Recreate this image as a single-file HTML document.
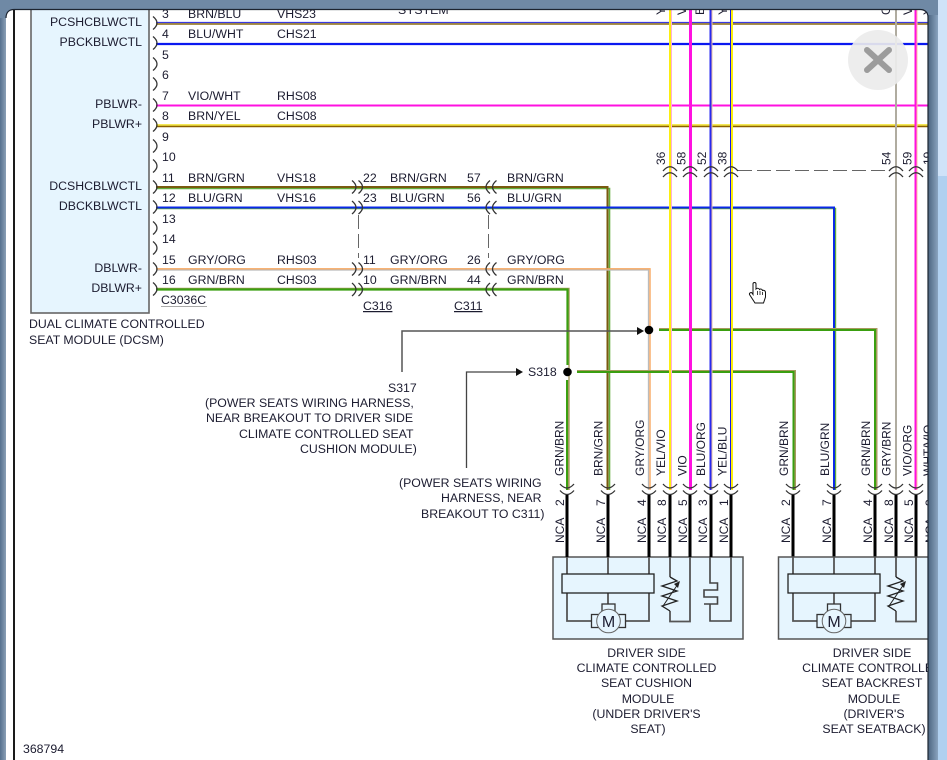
<!DOCTYPE html>
<html><head><meta charset="utf-8"><style>
html,body{margin:0;padding:0;background:#fff;width:947px;height:760px;overflow:hidden}
svg{display:block}
text{font-family:"Liberation Sans",Arial,sans-serif;font-size:12.3px;fill:#1c1c30}
.r text{font-size:12px}
.w{fill:none;stroke-linejoin:miter}
.c{fill:none;stroke:#333;stroke-width:1.3}
.b{fill:none;stroke:#000;stroke-width:3}
.g{fill:none;stroke:#555;stroke-width:1.8}
</style></head><body>
<svg width="947" height="760" viewBox="0 0 947 760" xmlns="http://www.w3.org/2000/svg">
<defs>
<linearGradient id="lg" x1="0" x2="1" y1="0" y2="0"><stop offset="0" stop-color="#56708e"/><stop offset="1" stop-color="#8ba0b6"/></linearGradient>
<linearGradient id="rg" x1="0" x2="1" y1="0" y2="0"><stop offset="0" stop-color="#4f6883"/><stop offset="1" stop-color="#8ca6c2"/></linearGradient>
<path id="rb" class="c" d="M0 -6.500Q8 0 0 6.500"/>
<path id="lb" class="c" d="M0 -6.500Q-8 0 0 6.500"/>
<g id="up"><path class="c" d="M-7 4Q0 -4.500 7 4"/><path class="c" d="M-7 10Q0 1.500 7 10"/></g>
<g id="dn"><path class="c" d="M-7 -4Q0 4 7 -4"/><path class="c" d="M-7 2.500Q0 10.500 7 2.500"/></g>
</defs>
<rect width="947" height="760" fill="#fff"/>

<!-- left module -->
<rect x="31" y="-5" width="118" height="318" fill="#e6f5fe" stroke="#666" stroke-width="1.600"/>
<g text-anchor="end">
<text x="142" y="26">PCSHCBLWCTL</text><text x="142" y="46">PBCKBLWCTL</text>
<text x="142" y="108">PBLWR-</text><text x="142" y="128">PBLWR+</text>
<text x="142" y="190">DCSHCBLWCTL</text><text x="142" y="210">DBCKBLWCTL</text>
<text x="142" y="272">DBLWR-</text><text x="142" y="292">DBLWR+</text>
</g>
<text x="29" y="328">DUAL CLIMATE CONTROLLED</text>
<text x="29" y="344">SEAT MODULE (DCSM)</text>
<text x="23" y="753">368794</text>

<!-- pin numbers -->
<g>
<text x="162" y="18">3</text><text x="162" y="38">4</text><text x="162" y="59">5</text><text x="162" y="79">6</text>
<text x="162" y="100">7</text><text x="162" y="120">8</text><text x="162" y="141">9</text><text x="162" y="161">10</text>
<text x="162" y="182">11</text><text x="162" y="202">12</text><text x="162" y="223">13</text><text x="162" y="243">14</text>
<text x="162" y="264">15</text><text x="162" y="284">16</text>
<text x="188" y="18">BRN/BLU</text><text x="277" y="18">VHS23</text>
<text x="188" y="38">BLU/WHT</text><text x="277" y="38">CHS21</text>
<text x="188" y="100">VIO/WHT</text><text x="277" y="100">RHS08</text>
<text x="188" y="120">BRN/YEL</text><text x="277" y="120">CHS08</text>
<text x="188" y="182">BRN/GRN</text><text x="277" y="182">VHS18</text>
<text x="188" y="202">BLU/GRN</text><text x="277" y="202">VHS16</text>
<text x="188" y="264">GRY/ORG</text><text x="277" y="264">RHS03</text>
<text x="188" y="284">GRN/BRN</text><text x="277" y="284">CHS03</text>
<text x="398" y="14">SYSTEM</text>
<text x="161" y="304">C3036C</text>
<path d="M161 306.500H207" stroke="#aaa" stroke-width="1"/>
<text x="363" y="182">22</text><text x="390" y="182">BRN/GRN</text><text x="467" y="182">57</text><text x="507" y="182">BRN/GRN</text>
<text x="363" y="202">23</text><text x="390" y="202">BLU/GRN</text><text x="467" y="202">56</text><text x="507" y="202">BLU/GRN</text>
<text x="363" y="264">11</text><text x="390" y="264">GRY/ORG</text><text x="467" y="264">26</text><text x="507" y="264">GRY/ORG</text>
<text x="363" y="284">10</text><text x="390" y="284">GRN/BRN</text><text x="467" y="284">44</text><text x="507" y="284">GRN/BRN</text>
<text x="363" y="310" text-decoration="underline">C316</text>
<text x="454" y="310" text-decoration="underline">C311</text>
</g>

<!-- horizontal wires to right edge -->
<path d="M156 22.500H930" stroke="#3a3ae0" stroke-width="1.300"/><path d="M156 24H930" stroke="#8a6a10" stroke-width="1.500"/>
<path d="M156 44H930" stroke="#0a18f0" stroke-width="2.200"/>
<path d="M156 105.500H930" stroke="#ff10e0" stroke-width="2"/>
<path d="M156 125H930" stroke="#f0e020" stroke-width="1.400"/><path d="M156 126.500H930" stroke="#8a6000" stroke-width="1.500"/>

<!-- harness wires with tracer -->
<path class="w" d="M156 188.500H609.500V490" stroke="#62ad3c" stroke-width="1.600" />
<path class="w" d="M156 187H607.500V490" stroke="#7a5a10" stroke-width="2" />
<path class="w" d="M156 208.500H835.500V490" stroke="#62ad3c" stroke-width="1.400"/>
<path class="w" d="M156 207.500H834V490" stroke="#0a28e8" stroke-width="2"/>
<path class="w" d="M156 270H648.500V490" stroke="#bbb" stroke-width="1.300"/>
<path class="w" d="M156 268.800H650V490" stroke="#f8a860" stroke-width="1.400"/>
<path class="w" d="M156 288.500H569V490" stroke="#a89a60" stroke-width="1.400"/>
<path class="w" d="M156 289.500H567.500V365" stroke="#3a9f10" stroke-width="2.200"/>
<path class="w" d="M567.500 380V490" stroke="#a89a60" stroke-width="3"/>
<path class="w" d="M567 380V490" stroke="#3a9f10" stroke-width="2"/>
<path class="w" d="M577 371.500H794.500V490" stroke="#a89a60" stroke-width="3"/>
<path class="w" d="M577 372H793.500V490" stroke="#3a9f10" stroke-width="2"/>
<path class="w" d="M659 329.500H876V490" stroke="#a89a60" stroke-width="3"/>
<path class="w" d="M659 330H875V490" stroke="#3a9f10" stroke-width="2"/>

<!-- vertical wires -->
<path d="M670 0V490" stroke="#fbee10" stroke-width="2"/><path d="M671.500 0V490" stroke="#ffb0d8" stroke-width="1"/>
<path d="M690.500 0V490" stroke="#ff10e0" stroke-width="3"/>
<path d="M710.500 0V490" stroke="#2a2af0" stroke-width="2"/><path d="M712 0V490" stroke="#e8c0a0" stroke-width="1"/>
<path d="M730.500 0V490" stroke="#1818f0" stroke-width="1"/><path d="M732 0V490" stroke="#fbee10" stroke-width="2"/>
<path d="M896 0V490" stroke="#b0aca0" stroke-width="2"/>
<path d="M915.500 0V490" stroke="#ff10e0" stroke-width="2"/><path d="M917 0V490" stroke="#ffc0a0" stroke-width="1"/>

<!-- dashed -->
<g stroke="#666" stroke-width="1" stroke-dasharray="14 5" fill="none">
<path d="M358.500 215V258"/><path d="M488.500 215V258"/><path d="M738 170.500H888"/>
</g>

<!-- pin brackets -->
<g>
<use href="#rb" x="153" y="23"/><use href="#rb" x="153" y="43"/><use href="#rb" x="153" y="64"/><use href="#rb" x="153" y="84"/>
<use href="#rb" x="153" y="105"/><use href="#rb" x="153" y="125"/><use href="#rb" x="153" y="146"/><use href="#rb" x="153" y="166"/>
<use href="#rb" x="153" y="187"/><use href="#rb" x="153" y="207"/><use href="#rb" x="153" y="228"/><use href="#rb" x="153" y="248"/>
<use href="#rb" x="153" y="269"/><use href="#rb" x="153" y="289"/>
<use href="#rb" x="352" y="187"/><use href="#rb" x="358.500" y="187"/><use href="#rb" x="352" y="207.500"/><use href="#rb" x="358.500" y="207.500"/>
<use href="#rb" x="352" y="269"/><use href="#rb" x="358.500" y="269"/><use href="#rb" x="352" y="289.500"/><use href="#rb" x="358.500" y="289.500"/>
<use href="#lb" x="490" y="187"/><use href="#lb" x="496.500" y="187"/><use href="#lb" x="490" y="207.500"/><use href="#lb" x="496.500" y="207.500"/>
<use href="#lb" x="490" y="269"/><use href="#lb" x="496.500" y="269"/><use href="#lb" x="490" y="289.500"/><use href="#lb" x="496.500" y="289.500"/>
<use href="#up" x="670" y="167"/><use href="#up" x="690" y="167"/><use href="#up" x="711" y="167"/><use href="#up" x="731" y="167"/>
<use href="#up" x="896" y="167"/><use href="#up" x="916" y="167"/>
</g>
<g class="r">
<text transform="translate(665 165) rotate(-90)">36</text>
<text transform="translate(685.500 165) rotate(-90)">58</text>
<text transform="translate(706 165) rotate(-90)">52</text>
<text transform="translate(726.500 165) rotate(-90)">38</text>
<text transform="translate(890.500 165) rotate(-90)">54</text>
<text transform="translate(911.500 165) rotate(-90)">59</text>
<text transform="translate(932 165) rotate(-90)">19</text>
<text transform="translate(665 15) rotate(-90)">YEL/VIO</text>
<text transform="translate(686 15) rotate(-90)">VIO</text>
<text transform="translate(704 15) rotate(-90)">BLU/ORG</text>
<text transform="translate(727 15) rotate(-90)">YEL/BLU</text>
<text transform="translate(890 15) rotate(-90)">GRY/BRN</text>
<text transform="translate(912 15) rotate(-90)">VIO/ORG</text>
<text transform="translate(932 15) rotate(-90)">YEL/VIO</text>
</g>

<!-- splices and leaders -->
<circle cx="567.500" cy="372" r="4.300" fill="#000"/>
<circle cx="649" cy="330" r="4.300" fill="#000"/>
<path d="M402 372V331H637" fill="none" stroke="#555" stroke-width="1.500"/>
<path d="M637 327L644 331L637 335Z" fill="#111"/>
<path d="M466.500 468V372H516" fill="none" stroke="#444" stroke-width="1.300"/>
<path d="M516 368L523 372L516 376Z" fill="#111"/>
<text x="528" y="376">S318</text>
<text x="388" y="392">S317</text>
<text x="205" y="407">(POWER SEATS WIRING HARNESS,</text>
<text x="206" y="422">NEAR BREAKOUT TO DRIVER SIDE</text>
<text x="239" y="438">CLIMATE CONTROLLED SEAT</text>
<text x="300" y="453">CUSHION MODULE)</text>
<text x="399" y="487">(POWER SEATS WIRING</text>
<text x="441" y="502">HARNESS, NEAR</text>
<text x="421" y="518">BREAKOUT TO C311)</text>

<!-- rotated wire labels -->
<g class="r">
<text transform="translate(563.500 476) rotate(-90)">GRN/BRN</text>
<text transform="translate(602.500 476) rotate(-90)">BRN/GRN</text>
<text transform="translate(644 476) rotate(-90)">GRY/ORG</text>
<text transform="translate(665 476) rotate(-90)">YEL/VIO</text>
<text transform="translate(686.500 476) rotate(-90)">VIO</text>
<text transform="translate(705 476) rotate(-90)">BLU/ORG</text>
<text transform="translate(726.500 476) rotate(-90)">YEL/BLU</text>
<text transform="translate(788 476) rotate(-90)">GRN/BRN</text>
<text transform="translate(829 476) rotate(-90)">BLU/GRN</text>
<text transform="translate(870 476) rotate(-90)">GRN/BRN</text>
<text transform="translate(890.500 476) rotate(-90)">GRY/BRN</text>
<text transform="translate(911.500 476) rotate(-90)">VIO/ORG</text>
<text transform="translate(932 476) rotate(-90)">WHT/VIO</text>
</g>

<!-- lower connector arcs -->
<g>
<use href="#dn" x="567" y="488"/><use href="#dn" x="608" y="488"/><use href="#dn" x="649" y="488"/><use href="#dn" x="670" y="488"/>
<use href="#dn" x="690" y="488"/><use href="#dn" x="711" y="488"/><use href="#dn" x="731" y="488"/>
<use href="#dn" x="793" y="488"/><use href="#dn" x="834" y="488"/><use href="#dn" x="875" y="488"/><use href="#dn" x="896" y="488"/><use href="#dn" x="916" y="488"/>
</g>

<!-- module 1 box -->
<rect x="553" y="557" width="190" height="82" fill="#e6f5fe" stroke="#555" stroke-width="1.500"/>
<path class="b" d="M567 495V557M608 495V557M649 495V557M670 495V557M690 495V557M711 495V557M731 495V557M793 495V557M834 495V557M875 495V557M896 495V557M916 495V557"/>
<g class="r">
<text transform="translate(564 506) rotate(-90)">2</text><text transform="translate(564 543) rotate(-90)">NCA</text>
<text transform="translate(605 506) rotate(-90)">7</text><text transform="translate(605 543) rotate(-90)">NCA</text>
<text transform="translate(646 506) rotate(-90)">4</text><text transform="translate(646 543) rotate(-90)">NCA</text>
<text transform="translate(666 506) rotate(-90)">8</text><text transform="translate(666 543) rotate(-90)">NCA</text>
<text transform="translate(687 506) rotate(-90)">5</text><text transform="translate(687 543) rotate(-90)">NCA</text>
<text transform="translate(707 506) rotate(-90)">3</text><text transform="translate(707 543) rotate(-90)">NCA</text>
<text transform="translate(728 506) rotate(-90)">1</text><text transform="translate(728 543) rotate(-90)">NCA</text>
<text transform="translate(790 506) rotate(-90)">2</text><text transform="translate(790 543) rotate(-90)">NCA</text>
<text transform="translate(831 506) rotate(-90)">7</text><text transform="translate(831 543) rotate(-90)">NCA</text>
<text transform="translate(872 506) rotate(-90)">4</text><text transform="translate(872 543) rotate(-90)">NCA</text>
<text transform="translate(893 506) rotate(-90)">8</text><text transform="translate(893 543) rotate(-90)">NCA</text>
<text transform="translate(913 506) rotate(-90)">5</text><text transform="translate(913 543) rotate(-90)">NCA</text>
<text transform="translate(934 506) rotate(-90)">3</text><text transform="translate(934 543) rotate(-90)">NCA</text>
</g>
<!-- module 1 internals -->
<g>
<path class="g" d="M567 557V574M608 557V574M649 557V574M567 593V621H591M608 593V604M649 593V621H625"/>
<rect x="562" y="574" width="92" height="19" fill="#e6f5fe" stroke="#222" stroke-width="1.300"/>
<rect x="602" y="604" width="13" height="8" fill="#e6f5fe" stroke="#333" stroke-width="1.300"/>
<rect x="591.500" y="614.500" width="7" height="13" fill="#e6f5fe" stroke="#333" stroke-width="1.300"/>
<rect x="618" y="614.500" width="7.500" height="13" fill="#e6f5fe" stroke="#333" stroke-width="1.300"/>
<circle cx="608.500" cy="621" r="11.800" fill="#e6f5fe" stroke="#666" stroke-width="1"/>
<text x="608.500" y="627" text-anchor="middle" style="font-size:16px">M</text>
<path class="g" d="M670 557V577M670 611V621.500H690V557"/>
<path d="M670 577L677 581L662 586L677 591L662 596L677 601L662 606L670 611" fill="none" stroke="#222" stroke-width="1.300"/>
<path d="M663 606L678 584" stroke="#222" stroke-width="1"/><path d="M680 581L674 584L678 588Z" fill="#222"/>
<path d="M710 557V583H717.500V590H704V597H717.500V604H704M710 604V621H731V557" fill="none" stroke="#444" stroke-width="1.600"/>
</g>

<!-- module 2 box -->
<rect x="778.500" y="557" width="170" height="82" fill="#e6f5fe" stroke="#555" stroke-width="1.500"/>
<g>
<path class="g" d="M793 557V574M834 557V574M875 557V574M793 593V621H817M834 593V604M875 593V621H851"/>
<rect x="788" y="574" width="92" height="19" fill="#e6f5fe" stroke="#222" stroke-width="1.300"/>
<rect x="827.500" y="604" width="13" height="8" fill="#e6f5fe" stroke="#333" stroke-width="1.300"/>
<rect x="817" y="614.500" width="7" height="13" fill="#e6f5fe" stroke="#333" stroke-width="1.300"/>
<rect x="843.500" y="614.500" width="7.500" height="13" fill="#e6f5fe" stroke="#333" stroke-width="1.300"/>
<circle cx="834" cy="621" r="11.800" fill="#e6f5fe" stroke="#666" stroke-width="1"/>
<text x="834" y="627" text-anchor="middle" style="font-size:16px">M</text>
<path class="g" d="M896 557V577M896 611V621.500H916V557"/>
<path d="M896 577L903 581L888 586L903 591L888 596L903 601L888 606L896 611" fill="none" stroke="#222" stroke-width="1.300"/>
<path d="M889 606L904 584" stroke="#222" stroke-width="1"/><path d="M906 581L900 584L904 588Z" fill="#222"/>
</g>

<!-- module captions -->
<g text-anchor="middle">
<text x="646.500" y="657">DRIVER SIDE</text><text x="646.500" y="672">CLIMATE CONTROLLED</text><text x="646.500" y="687">SEAT CUSHION</text>
<text x="648" y="703">MODULE</text><text x="646.500" y="718">(UNDER DRIVER'S</text><text x="648" y="733">SEAT)</text>
<text x="872" y="657">DRIVER SIDE</text><text x="872" y="672">CLIMATE CONTROLLED</text><text x="872" y="687">SEAT BACKREST</text>
<text x="874" y="703">MODULE</text><text x="874" y="718">(DRIVER'S</text><text x="874" y="733">SEAT SEATBACK)</text>
</g>

<!-- hand cursor -->
<path d="M753 284C753 282 756 282 756 284V289C757 288 759 288 759.500 289.500C760.500 288.500 762 289 762.500 290.500C763.500 290 765.500 290.500 765.500 292.500V297L763.500 303H755L749.500 294.500C749 293 751 292 752 293L753 294.500Z" fill="#fff" stroke="#111" stroke-width="1"/>
<path d="M757.500 291V295M760 291V295M762.500 292V295" stroke="#111" stroke-width=".8"/>

<!-- close button -->
<circle cx="878" cy="60" r="30" fill="#ebebeb" fill-opacity=".92"/>
<path d="M867 50L889 70M889 50L867 70" stroke="#9c9c9c" stroke-width="6" stroke-linecap="round"/>

<!-- window frame -->
<rect x="13" y="9" width="2" height="751" fill="#1a1a1a"/>
<path fill-rule="evenodd" fill="#6f89a5" d="M0 0H947V760H0ZM14 9.500C9 9.500 6 12.500 6 18V760H928V17C928 12.500 925 9.500 920 9.500Z"/>
<rect x="0" y="18" width="6" height="742" fill="url(#lg)"/>
<rect x="928.500" y="15" width="10" height="745" fill="url(#rg)"/>
<rect x="938" y="0" width="9" height="176" fill="#cfe2f8"/>
<rect x="938" y="176" width="9" height="584" fill="#b0d0f0"/>
<path d="M6 18C6 12.500 9 9.500 14 9.500H920C925 9.500 928 12.500 928 17V760" fill="none" stroke="#1c2430" stroke-width="1.200"/>
</svg>
</body></html>
